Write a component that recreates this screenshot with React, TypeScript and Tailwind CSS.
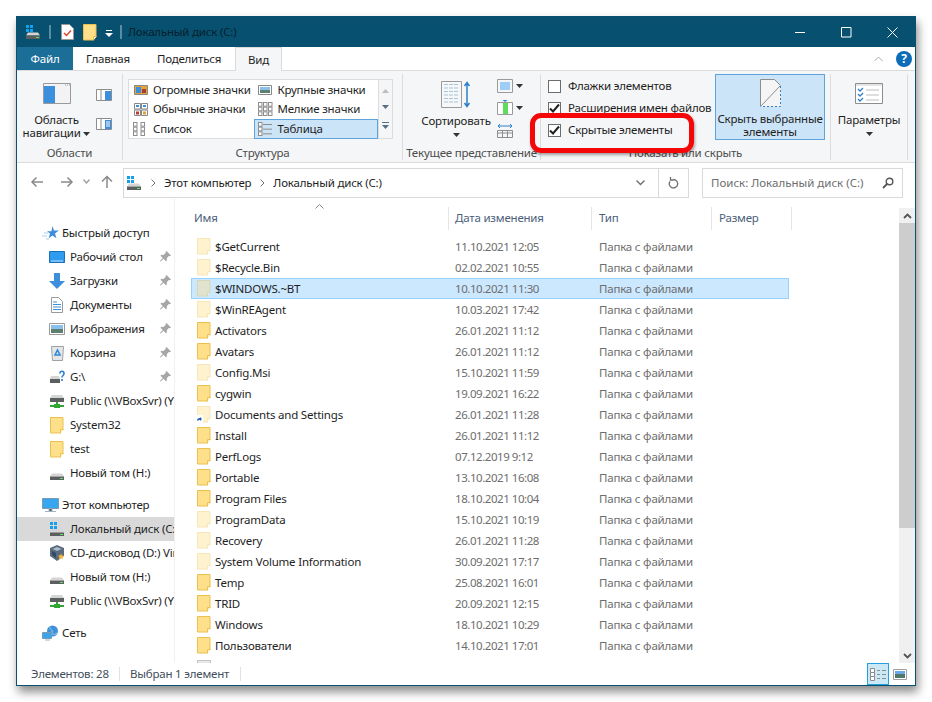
import React from 'react';

const Folder = ({ faded, grey }: { faded?: boolean; grey?: boolean }) => (
  <svg width="14" height="17" viewBox="0 0 14 17" className={`shrink-0 ${faded ? 'opacity-40' : ''}`}>
    <path d="M.5.500h12.500v12.500l-3 3H.5z" fill={grey ? '#e8e8e8' : '#ffe08a'} stroke={grey ? '#c4c4c4' : '#eac14f'} />
    <path d="M10.500 16.500v-4h3" fill="#fff3c9" stroke={grey ? '#c4c4c4' : '#eac14f'} />
  </svg>
);

const Drive = ({ win }: { win?: boolean }) => (
  <svg width="16" height="15" viewBox="0 0 16 15" className="shrink-0">
    {win && <path d="M1 0h3v3H1zM5 0h3v3H5zM1 4h3v3H1zM5 4h3v3H5z" fill="#14a0ec" />}
    <path d="M3 7.500h10l2 3H1z" fill="#d5d5d5" />
    <path d="M1 10.500h14v3.500H1z" fill="#5c5f60" />
    <path d="M11 12h3v1h-3z" fill="#5ee05e" />
  </svg>
);

const NetDrive = () => (
  <svg width="16" height="16" viewBox="0 0 16 16" className="shrink-0">
    <path d="M3 2h10l2 3H1z" fill="#d5d5d5" />
    <path d="M1 5h14v4H1z" fill="#5c5f60" />
    <path d="M7 9h2v3H7z" fill="#33a532" />
    <path d="M1 12h14v2H1z" fill="#33a532" />
    <path d="M5 11h6v4H5z" fill="#33a532" />
  </svg>
);

const Pin = () => (
  <svg width="11" height="11" viewBox="0 0 11 11">
    <path d="M6.500 0 11 4.500 9.800 5.200 8.800 5l-2 2.200.2 2-1 1L3.500 7.700.8 10.500 0 10l2.800-2.900L.5 4.800l1-1 2 .2 2.100-2.100-.1-1z" fill="#a6a6a6" />
  </svg>
);

const Caret = () => (
  <svg width="7" height="4" viewBox="0 0 7 4" className="inline-block shrink-0">
    <path d="M0 0h7L3.500 4z" fill="#333" />
  </svg>
);

const NavIcon = ({ name }: { name: string }) => {
  switch (name) {
    case 'star':
      return (
        <svg width="17" height="14" viewBox="0 0 17 14" className="shrink-0">
          <path d="M10.500 0 12 4.500h4.800l-3.800 3 1.400 4.800-3.900-2.900-3.900 2.900 1.400-4.800-3-2.300h4.400z" fill="#3f8ed8" />
          <path d="M0 10h5M2 7h4M4 13h3" stroke="#a9cfee" />
        </svg>
      );
    case 'desktop':
      return (
        <svg width="16" height="12" viewBox="0 0 16 12" className="shrink-0">
          <path d="M.5.500h15v11H.5z" fill="#2f9bef" stroke="#1b6fb5" />
          <path d="M2 10h12" stroke="#bfe3fb" />
        </svg>
      );
    case 'down':
      return (
        <svg width="16" height="16" viewBox="0 0 16 16" className="shrink-0">
          <path d="M5 0h6v8h5l-8 8-8-8h5z" fill="#3d8fdc" />
        </svg>
      );
    case 'docs':
      return (
        <svg width="12" height="16" viewBox="0 0 12 16" className="shrink-0">
          <path d="M.5.500h7l4 4v11H.5z" fill="#fff" stroke="#9a9a9a" />
          <path d="M2 5h4M2 7.500h8M2 10h8M2 12.500h8" stroke="#3d8fdc" />
        </svg>
      );
    case 'pics':
      return (
        <svg width="16" height="12" viewBox="0 0 16 12" className="shrink-0">
          <path d="M.5.500h15v11H.5z" fill="#fff" stroke="#9a9a9a" />
          <path d="M2 2h12v4H2z" fill="#8cc0ec" />
          <path d="M2 6h12v4H2z" fill="#5c7f70" />
        </svg>
      );
    case 'bin':
      return (
        <svg width="13" height="15" viewBox="0 0 13 15" className="shrink-0">
          <path d="M.5.500h12l-1 14h-10z" fill="#e4e6e8" stroke="#a0a0a0" />
          <path d="M6.500 4 9 9H4z" fill="none" stroke="#2d8ad8" strokeWidth="1.600" />
        </svg>
      );
    case 'unknown':
      return (
        <svg width="16" height="14" viewBox="0 0 16 14" className="shrink-0">
          <path d="M2 6h8l1 3H1z" fill="#d5d5d5" />
          <path d="M1 9h10v4H1z" fill="#5c5f60" />
          <path d="M11 3.500C11 .500 15 .500 15 3.500c0 2-2 2-2 4M13 9v2" fill="none" stroke="#2d7fd0" strokeWidth="1.600" />
        </svg>
      );
    case 'net':
      return <NetDrive />;
    case 'folder':
      return (
        <span className="flex w-4 justify-center">
          <Folder />
        </span>
      );
    case 'hdd':
      return <Drive />;
    case 'win':
      return <Drive win />;
    case 'cd':
      return (
        <svg width="16" height="16" viewBox="0 0 16 16" className="shrink-0">
          <path d="M8 0 15 3v8l-7 5-7-5V3z" fill="#5b6b7d" />
          <path d="M8 2 12.500 4 8 6 3.500 4z" fill="#a9bdd0" />
          <path d="M3 6l4 2v5l-4-3z" fill="#2e4a69" />
          <path d="M12 8.500l1 2 2.200.2-1.600 1.500.5 2.200-2.100-1.100-2 1.100.4-2.200-1.500-1.500 2.200-.2z" fill="#f6b93b" />
        </svg>
      );
    case 'pc':
      return (
        <svg width="17" height="15" viewBox="0 0 17 15" className="shrink-0">
          <path d="M.5.500h16v10H.5z" fill="#35a6ef" stroke="#7d99ad" />
          <path d="M7 11h3v2H7zM3 13.500h11" stroke="#9fb4c2" />
        </svg>
      );
    default:
      return (
        <svg width="17" height="16" viewBox="0 0 17 16" className="shrink-0">
          <circle cx="10.500" cy="6" r="5.500" fill="#3f92d8" />
          <path d="M8 1c-2 3 3 3 2 6s3 3 5 1" fill="none" stroke="#9bd0f2" />
          <path d="M.5 7.500h9v6h-9z" fill="#35a6ef" stroke="#7d99ad" />
          <path d="M3 15h5" stroke="#9fb4c2" />
        </svg>
      );
  }
};

const quick = [
  ['desktop', 'Рабочий стол', true],
  ['down', 'Загрузки', true],
  ['docs', 'Документы', true],
  ['pics', 'Изображения', true],
  ['bin', 'Корзина', true],
  ['unknown', 'G:\\', true],
  ['net', 'Public (\\\\VBoxSvr) (Y:)', false],
  ['folder', 'System32', false],
  ['folder', 'test', false],
  ['hdd', 'Новый том (H:)', false],
] as [string, string, boolean][];

const pc = [
  ['win', 'Локальный диск (C:)'],
  ['cd', 'CD-дисковод (D:) VirtualBox'],
  ['hdd', 'Новый том (H:)'],
  ['net', 'Public (\\\\VBoxSvr) (Y:)'],
];

const files = [
  ['$GetCurrent', '11.10.2021 12:05', 'faded'],
  ['$Recycle.Bin', '02.02.2021 10:55', 'faded'],
  ['$WINDOWS.~BT', '10.10.2021 11:30', 'faded'],
  ['$WinREAgent', '10.03.2021 17:42', 'faded'],
  ['Activators', '26.01.2021 11:12', ''],
  ['Avatars', '26.01.2021 11:12', ''],
  ['Config.Msi', '15.10.2021 11:59', 'faded'],
  ['cygwin', '19.09.2021 16:22', ''],
  ['Documents and Settings', '26.01.2021 11:28', 'link'],
  ['Install', '26.01.2021 11:12', ''],
  ['PerfLogs', '07.12.2019 9:12', ''],
  ['Portable', '13.10.2021 16:08', ''],
  ['Program Files', '18.10.2021 10:04', ''],
  ['ProgramData', '15.10.2021 10:19', 'faded'],
  ['Recovery', '26.01.2021 11:28', 'faded'],
  ['System Volume Information', '30.09.2021 17:17', 'faded'],
  ['Temp', '25.08.2021 16:01', ''],
  ['TRID', '20.09.2021 12:15', ''],
  ['Windows', '18.10.2021 10:29', ''],
  ['Пользователи', '14.10.2021 17:01', ''],
];

const Check = ({ on, label }: { on?: boolean; label: string }) => (
  <div className="flex h-[22px] items-center gap-[7px] whitespace-nowrap">
    <span className="flex h-[13px] w-[13px] items-center justify-center border border-[#6d6d6d] bg-white">
      {on && (
        <svg width="11" height="10" viewBox="0 0 11 10">
          <path d="M1 5.500 4 8.500 10 1.500" fill="none" stroke="#222" strokeWidth="2" />
        </svg>
      )}
    </span>
    <span>{label}</span>
  </div>
);

const GalleryItem = ({ icon, label, active }: { icon: React.ReactNode; label: string; active?: boolean }) => (
  <div className={`flex h-5 items-center gap-[5px] whitespace-nowrap border pl-[3px] ${active ? 'border-[#5fa3dd] bg-[#cce4f7]' : 'border-transparent'}`}>
    <span className="flex w-[15px] justify-center">{icon}</span>
    <span>{label}</span>
  </div>
);

const Grid3 = ({ cols, rows, dash }: { cols: number; rows: number; dash?: boolean }) => (
  <svg width="15" height="14" viewBox="0 0 15 14">
    {Array.from({ length: rows }).map((_, r) =>
      Array.from({ length: cols }).map((_, c) => (
        <g key={`${r}-${c}`}>
          <rect x={c * (15 / cols) + 0.5} y={r * (14 / rows) + 0.5} width="3.500" height={14 / rows - 1} fill="#fff" stroke="#8d8d8d" />
          {dash && <path d={`M${c * (15 / cols) + 5} ${r * (14 / rows) + 2.5}h${15 / cols - 6}`} stroke="#8d8d8d" />}
        </g>
      )),
    )}
  </svg>
);

const Group = ({ width, label, children }: { width: string; label: string; children: React.ReactNode }) => (
  <div className={`flex h-[86px] shrink-0 flex-col border-r border-[#dcdcdc] ${width}`}>
    <div className="flex min-h-0 flex-1">{children}</div>
    <div className="whitespace-nowrap text-center leading-[14px] text-[#4d4d4d]">{label}</div>
  </div>
);

export default function App() {
  return (
    <div className="relative h-[702px] w-[932px] overflow-hidden bg-white p-4 font-['Noto_Sans','Open_Sans',sans-serif] text-[11.5px] leading-4 tracking-[-0.2px] text-[#1e1e1e]">
      <div className="flex h-[670px] w-[900px] flex-col border border-[#0a5070] bg-white shadow-[2px_6px_9px_rgba(0,0,0,0.45)]">
        {/* title bar */}
        <div className="flex h-[30px] shrink-0 items-center bg-[#08506f] pl-2">
          <Drive win />
          <span className="ml-2 h-[14px] w-[2px] bg-[#5d8ca0]" />
          <svg width="13" height="16" viewBox="0 0 13 16" className="ml-[10px]">
            <path d="M.5.500h8l4 4v11H.5z" fill="#fff" stroke="#999" />
            <path d="M3 9l2.500 2.500L10 6.500" fill="none" stroke="#e0452a" strokeWidth="1.500" />
          </svg>
          <span className="ml-[9px] flex">
            <Folder />
          </span>
          <svg width="8" height="8" viewBox="0 0 8 8" className="ml-[8px] mt-1">
            <path d="M1 0h6v1H1zM0 3h8L4 7z" fill="#fff" />
          </svg>
          <span className="ml-[7px] h-[14px] w-[2px] bg-[#5d8ca0]" />
          <span className="ml-[6px] text-[#04202d]">Локальный диск (C:)</span>
          <div className="ml-auto flex items-center">
            <svg width="11" height="11" viewBox="0 0 11 11" className="mr-[35px]">
              <path d="M0 5.500h10" stroke="#fff" />
            </svg>
            <svg width="11" height="11" viewBox="0 0 11 11" className="mr-[35px]">
              <path d="M.5.500h9.500v9.500H.5z" fill="none" stroke="#fff" />
            </svg>
            <svg width="11" height="11" viewBox="0 0 11 11" className="mr-[17px]">
              <path d="M.5.500l10 10M10.500.500l-10 10" stroke="#fff" />
            </svg>
          </div>
        </div>

        {/* tabs */}
        <div className="relative flex h-[24px] shrink-0 items-stretch border-b border-[#dadbdc] bg-white">
          <div className="flex w-[56px] items-center justify-center bg-[#1b6e98] text-white">Файл</div>
          <div className="flex w-[70px] items-center justify-center">Главная</div>
          <div className="flex w-[92px] items-center justify-center">Поделиться</div>
          <div className="-mb-px flex w-[47px] items-center justify-center border-x border-t border-[#dadbdc] bg-[#f5f6f7]">Вид</div>
          <div className="ml-auto flex items-center gap-[13px] pr-[3px]">
            <svg width="9" height="6" viewBox="0 0 9 6">
              <path d="M.5 5 4.500 1l4 4" fill="none" stroke="#a8a8a8" />
            </svg>
            <span className="flex h-4 w-4 items-center justify-center rounded-full bg-[#0d6cb8] text-[12px] font-bold text-white">?</span>
          </div>
        </div>

        {/* ribbon */}
        <div className="flex h-[92px] shrink-0 items-start border-b border-[#dadbdc] bg-[#f5f6f7] pt-[3px]">
          <Group width="w-[106px]" label="Области">
            <div className="flex w-[79px] flex-col items-center pt-[9px]">
              <svg width="28" height="21" viewBox="0 0 28 21">
                <path d="M.5.500h27v20H.5z" fill="#f3f3f3" stroke="#9a9a9a" />
                <path d="M1 3h11v17H1z" fill="#3c8fdc" />
                <path d="M22 2h1M24 2h1M26 2h1" stroke="#9a9a9a" />
              </svg>
              <div className="mt-[9px] text-center leading-[13px]">
                Область
                <br />
                навигации <Caret />
              </div>
            </div>
            <div className="flex flex-col gap-[17px] pt-[15px]">
              <svg width="16" height="12" viewBox="0 0 16 12">
                <path d="M.5.500h15v11H.5z" fill="#fff" stroke="#8d8d8d" />
                <path d="M5 1v10" stroke="#8d8d8d" />
                <path d="M9 2h6v9H9z" fill="#3c8fdc" />
              </svg>
              <svg width="16" height="12" viewBox="0 0 16 12">
                <path d="M.5.500h15v11H.5z" fill="#fff" stroke="#8d8d8d" />
                <path d="M5 1v10" stroke="#8d8d8d" />
                <path d="M9 2h6v9H9z" fill="#3c8fdc" />
                <path d="M10 4h4M10 6h4M10 8h4" stroke="#fff" />
              </svg>
            </div>
          </Group>

          <Group width="w-[280px]" label="Структура">
            <div className="ml-[5px] mt-[5px] flex h-[60px] border border-[#dcdcdc]">
              <div className="grid w-[249px] grid-cols-2 grid-rows-3 bg-white">
                <GalleryItem label="Огромные значки" icon={<svg width="14" height="10" viewBox="0 0 14 10"><path d="M.5.500h13v9H.5z" fill="#e0a33a" stroke="#888" /><path d="M2 2h5v6H2z" fill="#3c8fdc" /><path d="M8 4h4v4H8z" fill="#b23c2a" /></svg>} />
                <GalleryItem label="Крупные значки" icon={<svg width="14" height="10" viewBox="0 0 14 10"><path d="M.5.500h13v9H.5z" fill="#fff" stroke="#888" /><path d="M2 2h10v3H2z" fill="#8cc0ec" /><path d="M2 5h10v3H2z" fill="#5c7f70" /></svg>} />
                <GalleryItem label="Обычные значки" icon={<svg width="14" height="13" viewBox="0 0 14 13"><path d="M.5.500h6v5.500h-6zM7.500.500h6v5.500h-6zM.5 7h6v5.500h-6zM7.500 7h6v5.500h-6z" fill="#fff" stroke="#888" /><path d="M2 8.500h3v3H2z" fill="#c0392b" /><path d="M9 8.500h3v3H9z" fill="#e0a33a" /><path d="M2 2h3v2H2zM9 2h3v2H9z" fill="#3c8fdc" /></svg>} />
                <GalleryItem label="Мелкие значки" icon={<Grid3 cols={3} rows={3} />} />
                <GalleryItem label="Список" icon={<Grid3 cols={2} rows={3} />} />
                <GalleryItem label="Таблица" active icon={<Grid3 cols={1} rows={3} dash />} />
              </div>
              <div className="flex w-[14px] flex-col items-center justify-around border-l border-[#dcdcdc] py-[3px]">
                <svg width="7" height="4" viewBox="0 0 7 4"><path d="M0 4h7L3.500 0z" fill="#bdbdbd" /></svg>
                <svg width="7" height="4" viewBox="0 0 7 4"><path d="M0 0h7L3.500 4z" fill="#5a6f85" /></svg>
                <svg width="7" height="7" viewBox="0 0 7 7"><path d="M0 0h7v1H0zM0 3h7L3.500 7z" fill="#5a6f85" /></svg>
              </div>
            </div>
          </Group>

          <Group width="w-[138px]" label="Текущее представление">
            <div className="flex w-full">
              <div className="flex w-[94px] flex-col items-center pl-[12px] pt-[7px]">
                <svg width="30" height="27" viewBox="0 0 30 27">
                  <path d="M.5.500h20v26H.5z" fill="#f7f7f7" stroke="#9a9a9a" />
                  <path d="M3 3.500h15M3 7h15M3 10.500h15M3 14h15M3 17.500h15M3 21h15" stroke="#a3c6e0" strokeDasharray="4 1" />
                  <path d="M26 2v23M23.500 5 26 1.500 28.500 5M23.500 22l2.500 3.500 2.500-3.500" fill="none" stroke="#2f7fc9" strokeWidth="1.500" />
                </svg>
                <div className="mt-[6px] text-center leading-[13px]">
                  Сортировать
                  <br />
                  <Caret />
                </div>
              </div>
              <div className="flex flex-col gap-[7px] pt-[5px]">
                <div className="flex items-center gap-[3px]">
                  <svg width="16" height="14" viewBox="0 0 16 14"><path d="M.5.500h15v13H.5z" fill="none" stroke="#9a9a9a" /><path d="M3 3h10v8H3z" fill="#9fcdf5" /></svg>
                  <Caret />
                </div>
                <div className="flex items-center gap-[3px]">
                  <svg width="16" height="15" viewBox="0 0 16 15"><path d="M.5 2.500h15v12H.5z" fill="#fff" stroke="#9a9a9a" /><path d="M6 3h5v11H6z" fill="#5ddc5d" /><path d="M5.500 0h5L8 2z" fill="#2f7fc9" /></svg>
                  <Caret />
                </div>
                <svg width="16" height="16" viewBox="0 0 16 16"><path d="M.5 8.500h15v7H.5zM5.500 8.500v7M10.500 8.500v7M.5 11h15" fill="none" stroke="#8d8d8d" /><path d="M1 4h14M3 2 1 4l2 2M13 2l2 2-2 2" fill="none" stroke="#2f7fc9" /></svg>
              </div>
            </div>
          </Group>

          <Group width="w-[290px]" label="Показать или скрыть">
            <div className="flex w-full">
              <div className="w-[174px] pl-[7px] pt-px">
                <Check label="Флажки элементов" />
                <Check on label="Расширения имен файлов" />
                <Check on label="Скрытые элементы" />
              </div>
              <div className="flex h-[66px] w-[110px] flex-col items-center border border-[#5fa3dd] bg-[#cce4f7] pt-[4px]">
                <svg width="21" height="28" viewBox="0 0 21 28">
                  <path d="M.5.500h14l6 6v21H.5z" fill="#f5f5f5" />
                  <path d="M.5 27.500V.500h14l6 6" fill="none" stroke="#8d8d8d" />
                  <path d="M20.500 7v20.500H1" fill="none" stroke="#2f7fc9" strokeDasharray="2 2" />
                  <path d="M.5 27.500 20 7" stroke="#8d8d8d" />
                </svg>
                <div className="mt-[5px] whitespace-nowrap text-center leading-[13px]">
                  Скрыть выбранные
                  <br />
                  элементы
                </div>
              </div>
            </div>
          </Group>

          <Group width="w-[77px]" label="">
            <div className="flex w-full flex-col items-center pt-[9px]">
              <svg width="28" height="21" viewBox="0 0 28 21">
                <path d="M.5.500h27v20H.5z" fill="#fff" stroke="#8d8d8d" />
                <path d="M1 1h26v2H1z" fill="#e5e5e5" />
                <path d="M3 6l2 2 3-3M3 11l2 2 3-3M3 16l2 2 3-3" fill="none" stroke="#2f7fc9" strokeWidth="1.300" />
                <path d="M11 7h13M11 12h13M11 17h13" stroke="#bdbdbd" />
              </svg>
              <div className="mt-[9px] text-center leading-[13px]">
                Параметры
                <br />
                <Caret />
              </div>
            </div>
          </Group>
        </div>

        {/* address row */}
        <div className="flex h-[36px] shrink-0 items-start pt-[5px]">
          <div className="flex w-[106px] items-center pl-[13px] pt-[7px]">
            <svg width="14" height="12" viewBox="0 0 14 12"><path d="M13 6H2M6.500 1.500 2 6l4.500 4.500" fill="none" stroke="#8a8a8a" strokeWidth="1.500" /></svg>
            <svg width="14" height="12" viewBox="0 0 14 12" className="ml-[16px]"><path d="M1 6h11M7.500 1.500 12 6l-4.500 4.500" fill="none" stroke="#8a8a8a" strokeWidth="1.500" /></svg>
            <svg width="7" height="5" viewBox="0 0 7 5" className="ml-[9px]"><path d="M.5.500 3.500 4l3-3.500" fill="none" stroke="#9a9a9a" strokeWidth="1.200" /></svg>
            <svg width="12" height="13" viewBox="0 0 12 13" className="ml-[11px]"><path d="M6 13V2M1 6.500 6 1.500l5 5" fill="none" stroke="#8a8a8a" strokeWidth="1.500" /></svg>
          </div>
          <div className="flex h-[30px] w-[566px] items-center border border-[#d9d9d9] pl-[2px]">
            <Drive win />
            <svg width="5" height="8" viewBox="0 0 5 8" className="ml-[9px]"><path d="M.5.500 4 4 .5 7.500" fill="none" stroke="#707070" /></svg>
            <span className="ml-[8px]">Этот компьютер</span>
            <svg width="5" height="8" viewBox="0 0 5 8" className="ml-[9px]"><path d="M.5.500 4 4 .5 7.500" fill="none" stroke="#707070" /></svg>
            <span className="ml-[8px]">Локальный диск (C:)</span>
            <div className="ml-auto flex h-full items-center">
              <svg width="9" height="6" viewBox="0 0 9 6" className="mr-[13px]"><path d="M.5.500l4 4 4-4" fill="none" stroke="#707070" strokeWidth="1.400" /></svg>
              <div className="flex h-full w-[30px] items-center justify-center border-l border-[#d9d9d9]">
                <svg width="11" height="12" viewBox="0 0 11 12"><path d="M5.500 2.500a4.200 4.200 0 1 1-3.500 1.800M2.500 0v3h3" fill="none" stroke="#707070" strokeWidth="1.300" /></svg>
              </div>
            </div>
          </div>
          <div className="ml-[13px] flex h-[30px] w-[201px] items-center justify-between border border-[#d9d9d9] pl-2 pr-[8px] tracking-normal text-[#6d6d6d]">
            <span>Поиск: Локальный диск (C:)</span>
            <svg width="12" height="12" viewBox="0 0 12 12"><circle cx="7.500" cy="4.500" r="3.300" fill="none" stroke="#555" strokeWidth="1.400" /><path d="M5 7 1 11" stroke="#555" strokeWidth="1.800" /></svg>
          </div>
        </div>

        {/* main */}
        <div className="flex min-h-0 flex-1">
          {/* nav */}
          <div className="w-[158px] shrink-0 overflow-hidden border-r border-[#f0f0f0] pt-[22px]">
            <NavHead icon="star" label="Быстрый доступ" />
            {quick.map(([icon, label, pin]) => (
              <NavRow key={label} icon={icon} label={label} pin={pin} />
            ))}
            <div className="h-2" />
            <NavHead icon="pc" label="Этот компьютер" />
            {pc.map(([icon, label], i) => (
              <NavRow key={label} icon={icon} label={label} active={i === 0} />
            ))}
            <div className="h-2" />
            <NavHead icon="globe" label="Сеть" />
          </div>

          {/* list */}
          <div className="relative min-w-0 flex-1 overflow-hidden pl-[15px] pt-[8px]">
            <svg width="9" height="5" viewBox="0 0 9 5" className="absolute left-[140px] top-[5px]"><path d="M.5 4.500l4-4 4 4" fill="none" stroke="#888" /></svg>
            <div className="flex h-[23px] items-center text-[#4c607a]">
              <div className="h-full w-[259px] border-r border-[#e5e5e5] pl-[4px] leading-[22px]">Имя</div>
              <div className="h-full w-[143px] border-r border-[#e5e5e5] pl-[6px] leading-[22px]">Дата изменения</div>
              <div className="h-full w-[120px] border-r border-[#e5e5e5] pl-[7px] leading-[22px]">Тип</div>
              <div className="h-full w-[80px] border-r border-[#e5e5e5] pl-[7px] leading-[22px]">Размер</div>
            </div>
            <div className="ml-px pt-[6px]">
              {files.map(([name, date, kind]) => {
                const sel = name === '$WINDOWS.~BT';
                return (
                  <div key={name} className={`flex h-[21px] w-[598px] items-center border ${sel ? 'border-[#99d1ff] bg-[#cce8ff]' : 'border-transparent'}`}>
                    <span className="relative ml-[5px] flex">
                      <Folder faded={kind !== ''} />
                      {kind === 'link' && (
                        <svg width="8" height="8" viewBox="0 0 8 8" className="absolute -left-[2px] bottom-0">
                          <path d="M0 0h8v8H0z" fill="#fff" />
                          <path d="M2 6c0-2 1-3 3-3V2l2 2-2 2V5C4 5 3 5 2 6z" fill="#1c5fb5" />
                        </svg>
                      )}
                    </span>
                    <span className="ml-[4px] w-[240px] whitespace-nowrap">{name}</span>
                    <span className="w-[144px] tracking-[-0.45px] text-[#6d6d6d]">{date}</span>
                    <span className="text-[#6d6d6d]">Папка с файлами</span>
                  </div>
                );
              })}
              <div className="ml-[6px] mt-[4px] h-[17px] w-[14px] border border-[#c4c4c4] bg-[#e8e8e8]" />
            </div>
          </div>

          {/* scrollbar */}
          <div className="mt-[9px] flex w-4 shrink-0 flex-col bg-[#f0f0f0]">
            <div className="flex h-[15px] items-center justify-center">
              <svg width="9" height="6" viewBox="0 0 9 6"><path d="M1 5l3.500-3.500L8 5" fill="none" stroke="#555" strokeWidth="1.800" /></svg>
            </div>
            <div className="h-[305px] bg-[#cdcdcd]" />
            <div className="mt-auto flex h-[15px] items-center justify-center">
              <svg width="9" height="6" viewBox="0 0 9 6"><path d="M1 1l3.500 3.500L8 1" fill="none" stroke="#555" strokeWidth="1.800" /></svg>
            </div>
          </div>
        </div>

        {/* status bar */}
        <div className="flex h-[22px] shrink-0 items-center pl-[14px] text-[#424e5a]">
          <span className="w-[88px]">Элементов: 28</span>
          <span className="h-[14px] w-px bg-[#e2e2e2]" />
          <span className="ml-[10px] w-[110px]">Выбран 1 элемент</span>
          <span className="h-[14px] w-px bg-[#e2e2e2]" />
          <div className="ml-auto flex h-full items-center pr-2">
            <div className="flex h-full w-[22px] items-center justify-center border border-[#26a0da] bg-[#cbe8f6]">
              <svg width="17" height="13" viewBox="0 0 17 13">
                <path d="M.5.500h4v4h-4zM.5 4.500h4v4h-4zM.5 8.500h4v4h-4z" fill="#fff" stroke="#8d8d8d" />
                <path d="M7 2.500h3M12 2.500h4M7 6.500h3M12 6.500h4M7 10.500h3M12 10.500h4" stroke="#8d8d8d" />
              </svg>
            </div>
            <svg width="14" height="11" viewBox="0 0 14 11" className="ml-[4px]">
              <path d="M.5.500h13v10H.5z" fill="#fff" stroke="#a0a0a0" />
              <path d="M2 2h10v3H2z" fill="#6ba9ea" />
              <path d="M2 5h10v4H2z" fill="#4f7868" />
            </svg>
          </div>
        </div>
      </div>

      {/* red annotation */}
      <div className="absolute left-[530px] top-[113px] h-[40px] w-[164px] rounded-[11px] border-[5px] border-[#f50707] shadow-[1px_2px_3px_rgba(0,0,0,0.35)]" />
    </div>
  );
}

function NavHead({ icon, label }: { icon: string; label: string }) {
  return (
    <div className="flex h-6 items-center whitespace-nowrap pl-[25px]">
      <span className="flex w-[19px]">
        <NavIcon name={icon} />
      </span>
      <span className="ml-px">{label}</span>
    </div>
  );
}

function NavRow({ icon, label, pin, active }: { icon: string; label: string; pin?: boolean; active?: boolean }) {
  return (
    <div className={`relative flex h-6 items-center whitespace-nowrap pl-[32px] ${active ? 'bg-[#d9d9d9]' : ''}`}>
      <span className="flex w-4 justify-center">
        <NavIcon name={icon} />
      </span>
      <span className="ml-[5px]">{label}</span>
      {pin && (
        <span className="absolute left-[143px] top-[6px] flex">
          <Pin />
        </span>
      )}
    </div>
  );
}
